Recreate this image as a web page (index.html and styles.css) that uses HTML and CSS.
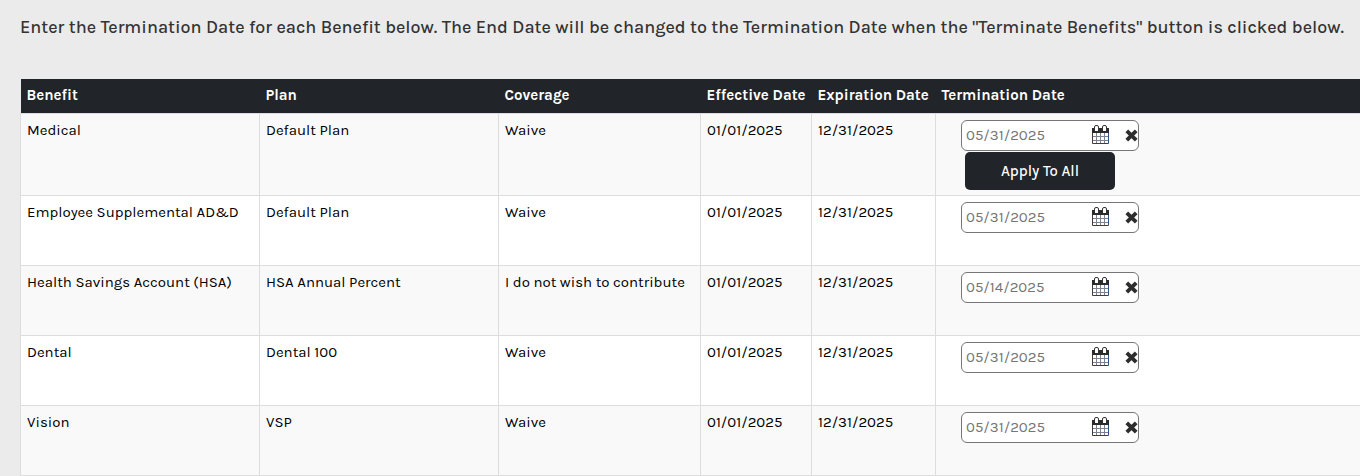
FILE: index.html
```html
<!DOCTYPE html>
<html lang="en">
<head>
  <meta charset="UTF-8" />
  <meta name="viewport" content="width=device-width, initial-scale=1.0" />
  <title>Terminate Benefits</title>
  <link rel="stylesheet" href="styles.css">
</head>
<body>
  <h1>Enter the Termination Date for each Benefit below. The End Date will be changed to the Termination Date when the "Terminate Benefits" button is clicked below.</h1>

  <!-- shared icons -->
  <svg class="sprite" aria-hidden="true">
    <symbol id="icon-calendar" viewBox="0 0 18 20">
      <path d="M0 3h17v16H0z" fill="#fff" />
      <path d="M4.5 8v10M8.5 8v10M12.5 8v10M1 11.5h15M1 15.5h15" fill="none" stroke="#7d8290" stroke-width="1" />
      <path d="M.5 7v11.5h16" fill="none" stroke="#4a3a34" />
      <path d="M16.5 7v11.5" fill="none" stroke="#2f5288" />
      <path d="M0 3h17v5H0z" fill="#2b2b2b" />
      <path d="M3 1.5h3V6H3zM11 1.5h3V6h-3z" fill="#fff" />
      <path d="M2.5 5V2q0-1.5 1.5-1.5h1Q6.500 .5 6.500 2v3M10.500 5V2q0-1.500 1.500-1.500h1q1.500 0 1.500 1.500v3" fill="none" stroke="#333" />
    </symbol>
    <symbol id="icon-clear" viewBox="0 0 13 13">
      <path d="M1.8 1.8l9.4 9.4M11.2 1.8l-9.4 9.4" fill="none" stroke="#2d2d2d" stroke-width="3.8" />
    </symbol>
  </svg>

  <table class="benefits">
    <colgroup>
      <col class="col-benefit">
      <col class="col-plan">
      <col class="col-coverage">
      <col class="col-effective">
      <col class="col-expiration">
      <col>
    </colgroup>
    <thead>
      <tr>
        <th>Benefit</th>
        <th>Plan</th>
        <th>Coverage</th>
        <th>Effective Date</th>
        <th>Expiration Date</th>
        <th>Termination Date</th>
      </tr>
    </thead>
    <tbody>
      <tr>
        <td>Medical</td>
        <td>Default Plan</td>
        <td>Waive</td>
        <td>01/01/2025</td>
        <td>12/31/2025</td>
        <td>
          <div class="date-box">
            <input type="text" value="05/31/2025" aria-label="Medical termination date">
            <button type="button" class="icon-btn" aria-label="Open calendar"><svg class="calendar"><use href="#icon-calendar" /></svg></button>
            <button type="button" class="icon-btn" aria-label="Clear date"><svg class="clear"><use href="#icon-clear" /></svg></button>
          </div>
          <button type="button" class="apply-all">Apply To All</button>
        </td>
      </tr>
      <tr>
        <td>Employee Supplemental AD&amp;D</td>
        <td>Default Plan</td>
        <td>Waive</td>
        <td>01/01/2025</td>
        <td>12/31/2025</td>
        <td>
          <div class="date-box">
            <input type="text" value="05/31/2025" aria-label="Employee Supplemental AD&amp;D termination date">
            <button type="button" class="icon-btn" aria-label="Open calendar"><svg class="calendar"><use href="#icon-calendar" /></svg></button>
            <button type="button" class="icon-btn" aria-label="Clear date"><svg class="clear"><use href="#icon-clear" /></svg></button>
          </div>
        </td>
      </tr>
      <tr>
        <td>Health Savings Account (HSA)</td>
        <td>HSA Annual Percent</td>
        <td>I do not wish to contribute</td>
        <td>01/01/2025</td>
        <td>12/31/2025</td>
        <td>
          <div class="date-box">
            <input type="text" value="05/14/2025" aria-label="Health Savings Account termination date">
            <button type="button" class="icon-btn" aria-label="Open calendar"><svg class="calendar"><use href="#icon-calendar" /></svg></button>
            <button type="button" class="icon-btn" aria-label="Clear date"><svg class="clear"><use href="#icon-clear" /></svg></button>
          </div>
        </td>
      </tr>
      <tr>
        <td>Dental</td>
        <td>Dental 100</td>
        <td>Waive</td>
        <td>01/01/2025</td>
        <td>12/31/2025</td>
        <td>
          <div class="date-box">
            <input type="text" value="05/31/2025" aria-label="Dental termination date">
            <button type="button" class="icon-btn" aria-label="Open calendar"><svg class="calendar"><use href="#icon-calendar" /></svg></button>
            <button type="button" class="icon-btn" aria-label="Clear date"><svg class="clear"><use href="#icon-clear" /></svg></button>
          </div>
        </td>
      </tr>
      <tr>
        <td>Vision</td>
        <td>VSP</td>
        <td>Waive</td>
        <td>01/01/2025</td>
        <td>12/31/2025</td>
        <td>
          <div class="date-box">
            <input type="text" value="05/31/2025" aria-label="Vision termination date">
            <button type="button" class="icon-btn" aria-label="Open calendar"><svg class="calendar"><use href="#icon-calendar" /></svg></button>
            <button type="button" class="icon-btn" aria-label="Clear date"><svg class="clear"><use href="#icon-clear" /></svg></button>
          </div>
        </td>
      </tr>
    </tbody>
  </table>
</body>
</html>
```
FILE: styles.css
```css
* { box-sizing: border-box; }

body {
  margin: 0;
  padding: 15px 0 0 20px;
  background: #ebebeb;
  color: #000;
  font-family: Karla, Inter, sans-serif;
  font-size: 15px;
  line-height: 20px;
}

h1 {
  margin: 0 0 40px;
  color: #333;
  font-size: 18px;
  font-weight: 500;
  line-height: 24px;
}

.sprite {
  position: absolute;
  width: 0;
  height: 0;
}

.benefits {
  width: 100%;
  table-layout: fixed;
  border-collapse: collapse;
}

.col-benefit, .col-plan { width: 239px; }
.col-coverage { width: 202px; }
.col-effective { width: 111px; }
.col-expiration { width: 124px; }

.benefits th {
  height: 34px;
  padding: 0 6px 2px;
  background: #212529;
  color: #fff;
  font-weight: 700;
  text-align: left;
  white-space: nowrap;
}

.benefits td {
  height: 70px;
  padding: 6px 6px 5px;
  border: 1px solid #ddd;
  background: #fff;
  vertical-align: top;
}

.benefits td:last-child { border-right: 0; }

.benefits tbody tr:nth-child(odd) td { background: #f9f9f9; }

.date-box {
  display: flex;
  align-items: center;
  width: 178px;
  height: 31px;
  margin-left: 19px;
  border: 1px solid #767676;
  border-radius: 6px;
  background: #fff;
}

.date-box input {
  width: 130px;
  padding: 0 4px;
  border: 0;
  background: none;
  color: #757575;
  font: inherit;
}

.icon-btn {
  display: flex;
  padding: 0;
  border: 0;
  background: none;
}

.icon-btn + .icon-btn { margin-left: auto; }

.calendar {
  width: 18px;
  height: 20px;
}

.clear {
  width: 13px;
  height: 13px;
}

.apply-all {
  display: block;
  width: 150px;
  height: 38px;
  margin: 1px 0 0 23px;
  border: 0;
  border-radius: 5px;
  background: #212529;
  color: #fff;
  font: inherit;
  font-weight: 500;
}
```
